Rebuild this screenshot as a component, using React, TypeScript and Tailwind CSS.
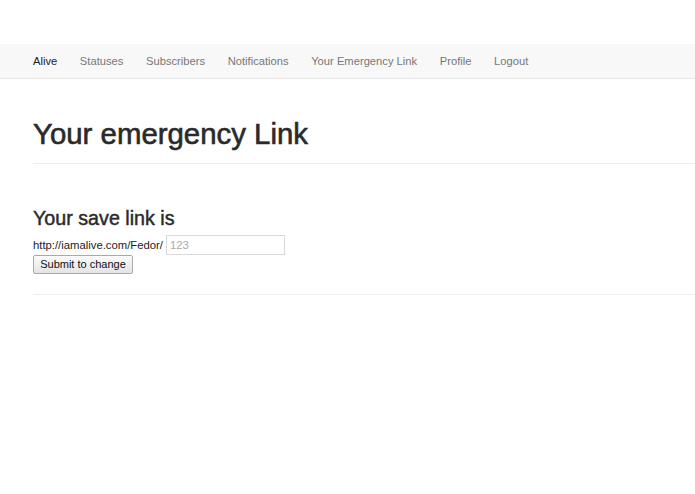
import React from "react";

const items = ["Statuses", "Subscribers", "Notifications", "Your Emergency Link", "Profile", "Logout"];

export default function App() {
  return (
    <div className="min-h-[494px] bg-white pt-[44px] text-[#333]" style={{ fontFamily: '"Liberation Sans", Arial, sans-serif' }}>
      <nav className="flex h-[35px] items-center border-b border-[#e7e7e7] bg-[#f8f8f8] pl-[33px] text-[11.2px]">
        <span className="pr-[11.3px] text-[#222]">Alive</span>
        {items.map((t) => (
          <span key={t} className="px-[11.3px] text-[#777]">
            {t}
          </span>
        ))}
      </nav>
      <main className="pl-[33px]">
        <div className="mt-[39px] border-b border-[#eee] pb-[13px]">
          <h1 className="text-[29.4px] leading-[1.1] text-[#2a2a2a]" style={{ WebkitTextStroke: "0.6px #2a2a2a" }}>
            Your emergency Link
          </h1>
        </div>
        <h2 className="mt-[44px] text-[19.7px] leading-[1.05] text-[#2a2a2a]" style={{ WebkitTextStroke: "0.45px #2a2a2a" }}>
          Your save link is
        </h2>
        <div className="mt-[6px] flex h-[20px] items-center text-[11.3px] text-[#222]">
          <span>http://iamalive.com/Fedor/</span>
          <input
            className="ml-[3px] h-[20px] w-[119px] border border-[#d9d9d9] bg-white px-[3px] text-[11.3px] outline-none placeholder:text-[#aaa]"
            placeholder="123"
          />
        </div>
        <button className="flex h-[19px] w-[100px] items-center justify-center rounded-[2px] border border-[#a9a9a9] bg-gradient-to-b from-[#fbfbfb] to-[#e4e4e4] text-[11px] text-[#111]">
          Submit to change
        </button>
        <div className="mt-[20px] border-b border-[#eee]" />
      </main>
    </div>
  );
}
